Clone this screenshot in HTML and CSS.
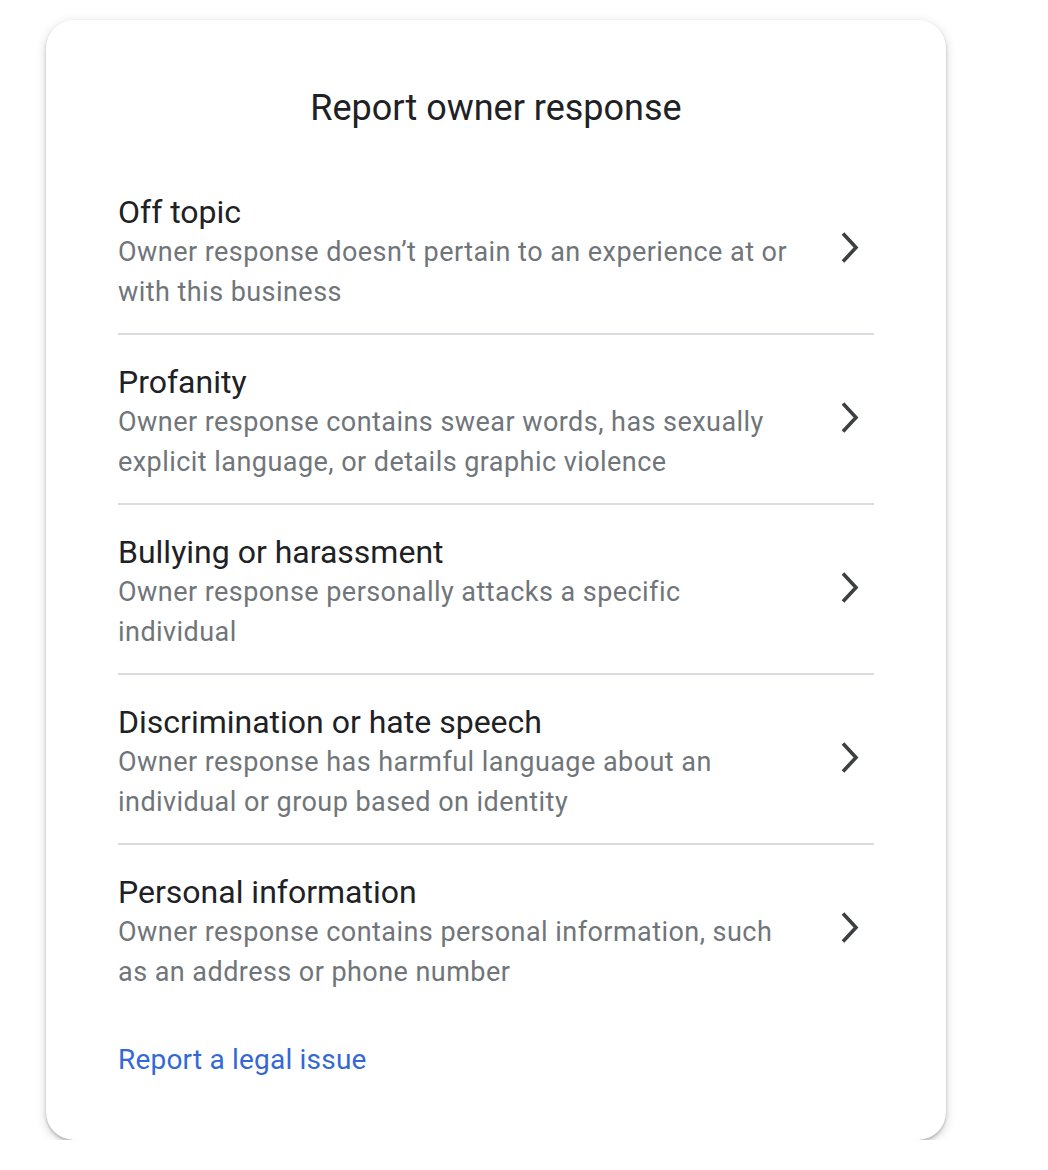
FILE: index.html
```html
<!DOCTYPE html>
<html>
<head>
<meta charset="utf-8">
<link rel="stylesheet" href="styles.css">
</head>
<body>
<div class="card">
  <h1 class="heading">Report owner response</h1>
  <ul class="list">
    <li class="item">
      <div class="text">
        <div class="title">Off topic</div>
        <div class="desc">Owner response doesn’t pertain to an experience at or with this business</div>
      </div>
      <svg class="chev" viewBox="0 0 20 33" width="20" height="33"><path d="M3 2.5 L16 16.5 L3 30.5" fill="none" stroke="#3c4043" stroke-width="3.6"/></svg>
    </li>
    <li class="item">
      <div class="text">
        <div class="title">Profanity</div>
        <div class="desc">Owner response contains swear words, has sexually explicit language, or details graphic violence</div>
      </div>
      <svg class="chev" viewBox="0 0 20 33" width="20" height="33"><path d="M3 2.5 L16 16.5 L3 30.5" fill="none" stroke="#3c4043" stroke-width="3.6"/></svg>
    </li>
    <li class="item">
      <div class="text">
        <div class="title">Bullying or harassment</div>
        <div class="desc">Owner response personally attacks a specific individual</div>
      </div>
      <svg class="chev" viewBox="0 0 20 33" width="20" height="33"><path d="M3 2.5 L16 16.5 L3 30.5" fill="none" stroke="#3c4043" stroke-width="3.6"/></svg>
    </li>
    <li class="item">
      <div class="text">
        <div class="title">Discrimination or hate speech</div>
        <div class="desc">Owner response has harmful language about an individual or group based on identity</div>
      </div>
      <svg class="chev" viewBox="0 0 20 33" width="20" height="33"><path d="M3 2.5 L16 16.5 L3 30.5" fill="none" stroke="#3c4043" stroke-width="3.6"/></svg>
    </li>
    <li class="item last">
      <div class="text">
        <div class="title">Personal information</div>
        <div class="desc">Owner response contains personal information, such as an address or phone number</div>
      </div>
      <svg class="chev" viewBox="0 0 20 33" width="20" height="33"><path d="M3 2.5 L16 16.5 L3 30.5" fill="none" stroke="#3c4043" stroke-width="3.6"/></svg>
    </li>
  </ul>
  <a class="legal" href="#">Report a legal issue</a>
</div>
</body>
</html>
```
FILE: styles.css
```css
html, body {
  margin: 0;
  padding: 0;
  background: #ffffff;
}
body {
  font-family: Roboto, "Noto Sans", Arial, sans-serif;
  padding: 20px 0 0 46px;
}
.card {
  width: 900px;
  height: 1120px;
  box-sizing: border-box;
  background: #fff;
  border-radius: 28px;
  box-shadow: 0 2px 3px rgba(60,64,67,0.3), 0 3px 8px 2px rgba(60,64,67,0.15);
  padding: 68px 72px 0 72px;
}
.heading {
  margin: 0;
  font-weight: 400;
  font-size: 36px;
  line-height: 40px;
  color: #202124;
  text-align: center;
}
.list {
  list-style: none;
  margin: 64px 0 0 0;
  padding: 0;
}
.item {
  display: flex;
  align-items: center;
  border-bottom: 2px solid #dadce0;
  padding: 0 0 21px 0;
  margin-bottom: 27px;
}
.item.last {
  border-bottom: none;
}
.text {
  flex: 1;
  padding-right: 44px;
}
.title {
  font-size: 32px;
  line-height: 40px;
  color: #202124;
}
.desc {
  font-size: 27px;
  line-height: 40px;
  color: #70757a;
  letter-spacing: 0.45px;
}
.chev {
  flex: none;
  margin: 0 14px 10px 0;
}
.legal {
  display: inline-block;
  margin-top: 0;
  font-size: 28px;
  line-height: 40px;
  letter-spacing: 0.2px;
  color: #3369d6;
  text-decoration: none;
}
```
